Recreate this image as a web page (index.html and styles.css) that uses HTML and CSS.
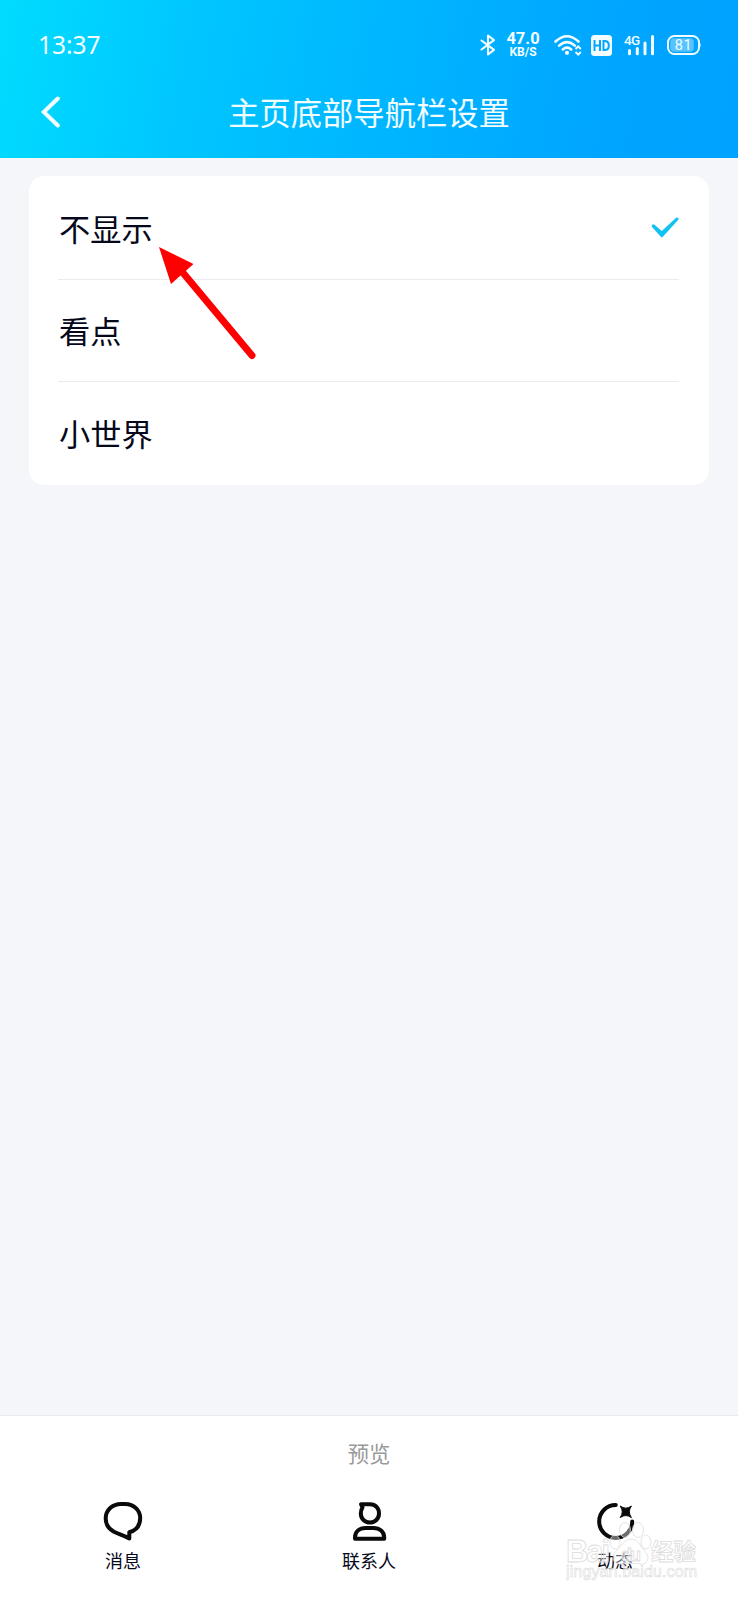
FILE: index.html
```html
<!DOCTYPE html>
<html lang="zh-CN">
<head>
    <meta charset="UTF-8">
    <meta name="viewport" content="width=device-width, initial-scale=1.0">
    <title>主页底部导航栏设置</title>
    <link rel="stylesheet" href="styles.css">
</head>
<body>
    <header class="header">
        <div class="status-bar">
            <span class="time">13:37</span>
            <div class="status-icons">
                <svg class="bluetooth" width="16" height="22" viewBox="0 0 16 22" fill="none">
                    <path d="M1.5 6.5L14 15.8L8 20.5V1.5L14 6.2L1.5 15.5" stroke="currentColor" stroke-width="2.1" stroke-linejoin="round" stroke-linecap="round"/>
                </svg>
                <div class="speed">
                    <span class="speed-value">47.0</span>
                    <span class="speed-unit">KB/S</span>
                </div>
                <svg class="wifi" width="28" height="22" viewBox="0 0 28 22" fill="none">
                    <path d="M1.5 7.5Q13 -3 24.5 7.5M5.2 11.6Q13 4.7 20.8 11.6M8.8 15.4Q13 11.8 17.2 15.4" stroke="currentColor" stroke-width="2.6" stroke-linecap="round"/>
                    <circle cx="13" cy="18.8" r="2.1" fill="currentColor"/>
                    <path d="M21.6 15L24.2 12.4L26.8 15M21.6 18L24.2 20.6L26.8 18" stroke="currentColor" stroke-width="2"/>
                </svg>
                <svg class="hd" width="21" height="21" viewBox="0 0 21 21">
                    <rect width="21" height="21" rx="3.5" fill="currentColor"/>
                    <path d="M3.5 5V16M9 5V16M3.5 10.5H9M12.5 6H13.8Q17.8 6 17.8 10.5Q17.8 15 13.8 15H12.5Z" fill="none" stroke="#05a5ff" stroke-width="2"/>
                </svg>
                <svg class="signal" width="32" height="22" viewBox="0 0 32 22">
                    <text class="signal-text" x="0" y="10.8">4G</text>
                    <path d="M5.5 16.5V19.8M13.3 14.5V19.8M21 9V19.8M28.5 2.5V19.8" fill="none" stroke="currentColor" stroke-width="3" stroke-linecap="round"/>
                </svg>
                <svg class="battery" width="35" height="20" viewBox="0 0 35 20">
                    <rect x="1" y="1" width="31" height="18" rx="6.5" fill="none" stroke="currentColor" stroke-width="2"/>
                    <rect x="3.3" y="3.3" width="23.5" height="13.4" rx="4" fill="#fff" fill-opacity="0.35"/>
                    <path d="M32.2 6.5Q35 10 32.2 13.5Z" fill="currentColor"/>
                    <text class="battery-text" x="16.5" y="14.8" text-anchor="middle">81</text>
                </svg>
            </div>
        </div>
        <div class="title-bar">
            <button class="back" aria-label="返回">
                <svg width="20" height="32" viewBox="0 0 20 32" fill="none">
                    <path d="M17.8 2.5L3.8 16L17.8 29.5" stroke="currentColor" stroke-width="4" stroke-linecap="round"/>
                </svg>
            </button>
            <h1>主页底部导航栏设置</h1>
        </div>
    </header>

    <main class="content">
        <ul class="options">
            <li class="option">
                <span>不显示</span>
                <svg class="check" width="28" height="21" viewBox="0 0 28 21">
                    <path d="M1.2 7.8Q2.4 6.8 3.5 7.8L10.8 14L24.8 0.9Q26.3 0 27.3 1.1Q28 2.1 27.1 3.1L12.1 19.6Q10.8 20.8 9.6 19.5L1 10Q0.2 8.8 1.2 7.8Z" fill="#12c2f2"/>
                </svg>
            </li>
            <li class="option"><span>看点</span></li>
            <li class="option"><span>小世界</span></li>
        </ul>
        <svg class="pointer-arrow" width="100" height="116" viewBox="0 0 100 116">
            <path d="M20 21L93 108.5" stroke="#fe0000" stroke-width="7" stroke-linecap="round"/>
            <path d="M0 0L34.5 17L12 37Z" fill="#fe0000"/>
        </svg>
    </main>

    <footer class="preview">
        <p class="preview-label">预览</p>
        <nav class="tabs">
            <div class="tab">
                <svg width="40" height="40" viewBox="0 0 40 40" fill="none">
                    <path d="M18 3H22C31.5 3 37.2 10 37.2 17C37.2 24.5 33.5 29.3 26.3 31.3L26.3 37.5C20 34 15 33 10.5 30.5C5.8 27.8 2.7 23 2.7 17.5C2.7 9 9.5 3 18 3Z" stroke="currentColor" stroke-width="4" stroke-linejoin="round"/>
                </svg>
                <span>消息</span>
            </div>
            <div class="tab">
                <svg width="40" height="40" viewBox="0 0 40 40" fill="none">
                    <path d="M12 3.2H21C26.5 3.2 30 7.2 30 12.5C30 17.8 26 21.5 21 21.5C15.8 21.5 11.8 17.7 11.8 12.5C11.8 10 12.2 8.3 13.5 6.5Z" stroke="currentColor" stroke-width="4" stroke-linejoin="round"/>
                    <path d="M6 37.8V36.5C6 30.5 10.5 27 16.5 27H24.5C30.5 27 35.2 30.5 35.2 36.5V37.8Z" stroke="currentColor" stroke-width="4" stroke-linejoin="round"/>
                </svg>
                <span>联系人</span>
            </div>
            <div class="tab">
                <svg width="40" height="40" viewBox="0 0 40 40" fill="none">
                    <path d="M20.8 4A16.5 16.5 0 1 0 37.2 20.5" stroke="currentColor" stroke-width="4" stroke-linecap="round"/>
                    <path d="M25.2 5Q30.8 9.3 36.4 5Q32.3 10.8 36.4 16.6Q30.8 12.5 25.2 16.6Q29.3 10.8 25.2 5Z" fill="currentColor" stroke="currentColor" stroke-linejoin="round"/>
                </svg>
                <span>动态</span>
            </div>
        </nav>
        <svg class="watermark" width="136" height="70" viewBox="0 0 136 70">
            <g class="paw">
                <ellipse cx="49" cy="23" rx="5" ry="7"/>
                <ellipse cx="59" cy="11" rx="5.5" ry="7.5"/>
                <ellipse cx="72" cy="11" rx="5.5" ry="7.5"/>
                <ellipse cx="80" cy="23" rx="5" ry="7"/>
                <path d="M65 20C72 20 74 27 78 31C85 38 82 46 74 45C68 44 62 44 56 45C47 46 44 38 51 31C56 27 58 20 65 20Z"/>
            </g>
            <text class="wm-baidu" x="0" y="43" textLength="44">Bai</text>
            <text class="wm-du" x="55" y="42" textLength="20">du</text>
            <text class="wm-cn" x="85" y="41" textLength="45">经验</text>
            <text class="wm-url" x="0" y="58" textLength="131">jingyan.baidu.com</text>
        </svg>
    </footer>
</body>
</html>
```

FILE: styles.css
```css
:root {
    --bg-color: #f4f6fa;
    --card-color: #ffffff;
    --text-color: #05081a;
    --line-color: #e8ebee;
}

* {
    box-sizing: border-box;
}

body {
    font-family: "Noto Sans CJK SC", sans-serif;
    background-color: var(--bg-color);
    color: var(--text-color);
    margin: 0;
    height: 100vh;
    display: flex;
    flex-direction: column;
    overflow: hidden;
}

.header {
    height: 158px;
    padding-top: 20px;
    color: #f2fdff;
    background: linear-gradient(100deg, #00dcff 0%, #00c6ff 26%, #00b7ff 50%, #00a5ff 82%, #00a2ff 100%);
}

.status-bar {
    height: 50px;
    padding: 0 36px 0 38px;
    display: flex;
    align-items: center;
    justify-content: space-between;
}

.time {
    font-family: "Noto Sans", sans-serif;
    font-size: 24.5px;
    line-height: 50px;
}

.status-icons {
    display: flex;
    align-items: center;
}

.speed {
    width: 34px;
    margin: 0 14px 0 10px;
    display: flex;
    flex-direction: column;
    align-items: center;
    font-family: Roboto, sans-serif;
    font-weight: 700;
}

.speed-value {
    font-size: 16.5px;
    line-height: 14px;
}

.speed-unit {
    font-size: 12px;
    line-height: 12px;
}

.hd {
    margin: 0 12px 0 9px;
}

.battery {
    margin-left: 11px;
}

.signal-text {
    font: 500 13.5px Roboto, sans-serif;
    letter-spacing: -0.6px;
    fill: currentColor;
}

.battery-text {
    font: 14.5px Roboto, sans-serif;
    letter-spacing: 0.5px;
    fill: currentColor;
}

.title-bar {
    height: 84px;
    padding: 0 40px;
    display: grid;
    grid-template-columns: 20px 1fr 20px;
    align-items: center;
}

.back {
    display: flex;
    padding: 0;
    border: none;
    background: none;
    color: inherit;
}

h1 {
    margin: 0;
    font-size: 31.3px;
    font-weight: 400;
    line-height: 46px;
    text-align: center;
    white-space: nowrap;
}

.content {
    position: relative;
    flex: 1;
    padding: 18px 29px;
}

.options {
    margin: 0;
    padding: 0 30px 0 29px;
    list-style: none;
    background-color: var(--card-color);
    border-radius: 15px;
}

.option {
    height: 103px;
    display: flex;
    align-items: center;
    justify-content: space-between;
    font-size: 31.2px;
    line-height: 46px;
}

.option + .option {
    height: 102px;
    padding-bottom: 1px;
    border-top: 1px solid #e9ebee;
}

.option:last-child {
    height: 104px;
    padding-bottom: 2px;
}

.option span {
    padding-left: 1px;
}

/* Red arrow drawn over the list */
.pointer-arrow {
    position: absolute;
    left: 159px;
    top: 89px;
}

.preview {
    position: relative;
    height: 185px;
    background-color: var(--card-color);
    border-top: 1px solid var(--line-color);
}

.preview-label {
    margin: 0;
    padding-top: 21px;
    font-size: 21.3px;
    line-height: 32px;
    text-align: center;
    color: #999999;
}

.tabs {
    margin-top: 32px;
    display: grid;
    grid-template-columns: repeat(3, 1fr);
}

.tab {
    display: flex;
    flex-direction: column;
    align-items: center;
    font-size: 18px;
    line-height: 26px;
    gap: 6px;
}

.tab svg {
    color: #0a0a0a;
}

/* Site mark in the corner */
.watermark {
    position: absolute;
    left: 566px;
    top: 103px;
    fill: rgba(255, 255, 255, 0.4);
    stroke: #dcdcdc;
    stroke-width: 0.8px;
    font-family: "Liberation Sans", "Noto Sans CJK SC", sans-serif;
}

.wm-baidu {
    font-size: 31px;
    font-weight: 700;
}

.wm-du {
    font-size: 18px;
    font-weight: 700;
}

.wm-cn {
    font-family: "Noto Sans CJK SC", sans-serif;
    font-size: 22.5px;
    font-weight: 700;
}

.wm-url {
    font-size: 16px;
    stroke-width: 0.6px;
}
```
